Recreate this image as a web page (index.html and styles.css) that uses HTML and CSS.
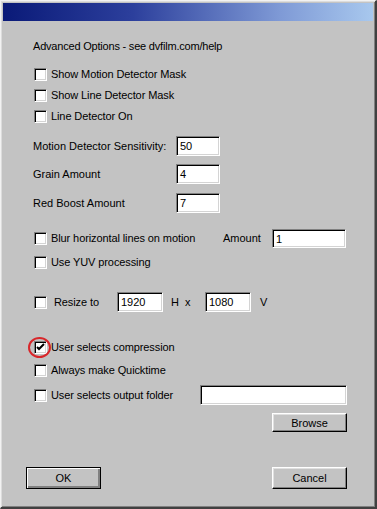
FILE: index.html
```html
<!DOCTYPE html>
<html lang="en">

<head>
    <meta charset="UTF-8">
    <title>Advanced Options</title>
    <link rel="stylesheet" href="styles.css">
</head>

<body>
    <div class="window">
        <div class="titlebar"></div>

        <div class="content">
            <div class="row heading">Advanced Options - see dvfilm.com/help</div>

            <div class="row r-mask1"><span class="check"></span><span class="label">Show Motion Detector Mask</span></div>
            <div class="row r-tight"><span class="check"></span><span class="label">Show Line Detector Mask</span></div>
            <div class="row r-tight"><span class="check"></span><span class="label">Line Detector On</span></div>

            <div class="row r-motion"><span class="field-label">Motion Detector Sensitivity:</span><span class="edit small">50</span></div>
            <div class="row r-grain"><span class="field-label">Grain Amount</span><span class="edit small">4</span></div>
            <div class="row r-red"><span class="field-label">Red Boost Amount</span><span class="edit small">7</span></div>

            <div class="row r-blur">
                <span class="check"></span><span class="label blur-label">Blur horizontal lines on motion</span>
                <span class="amount-label">Amount</span><span class="edit amount">1</span>
            </div>
            <div class="row r-yuv"><span class="check"></span><span class="label">Use YUV processing</span></div>

            <div class="row r-resize">
                <span class="check"></span><span class="label resize-label">Resize to</span>
                <span class="edit size">1920</span><span class="hx">H&nbsp;&nbsp;x</span>
                <span class="edit size">1080</span><span class="v">V</span>
            </div>

            <div class="row r-compress">
                <span class="check checked">
                    <svg width="9" height="9" viewBox="0 0 9 9"><path d="M1 4 L3 6 L8 1" fill="none" stroke="#000" stroke-width="2"/></svg>
                    <span class="ring"></span>
                </span>
                <span class="label">User selects compression</span>
            </div>
            <div class="row r-quick"><span class="check"></span><span class="label">Always make Quicktime</span></div>
            <div class="row r-folder">
                <span class="check"></span><span class="label folder-label">User selects output folder</span>
                <span class="edit folder"></span>
            </div>

            <div class="row r-browse"><button class="btn browse">Browse</button></div>

            <div class="row r-bottom">
                <button class="btn default">OK</button>
                <button class="btn">Cancel</button>
            </div>
        </div>
    </div>
</body>

</html>
```

FILE: styles.css
```css
body {
    margin: 0;
    background: #c0c0c0;
    font-family: "Liberation Sans", Arial, sans-serif;
    font-size: 11px;
    color: #000;
}

.window {
    width: 377px;
    height: 509px;
    box-sizing: border-box;
    background: #c3c3c3;
    border-top: 1px solid #f2f2f2;
    border-left: 1px solid #f2f2f2;
    border-right: 2px solid #404040;
    border-bottom: 2px solid #404040;
    box-shadow: inset 1px 1px 0 #dcdcdc, inset -1px -1px 0 #808080;
    padding: 2px 2px 0 2px;
}

.titlebar {
    height: 18px;
    background: linear-gradient(to right, #0a1a78, #2c3f9c 35%, #7f9ad6 75%, #a8c8ee);
}

.content {
    padding-left: 30px;
}

.row {
    display: flex;
    align-items: center;
    height: 20px;
}

.heading { margin-top: 15px; letter-spacing: -0.2px; }
.r-mask1 { margin-top: 8px; }
.r-tight { margin-top: 1px; }
.r-motion { margin-top: 10px; }
.r-grain { margin-top: 8px; }
.r-red { margin-top: 9px; }
.r-blur { margin-top: 15px; }
.r-yuv { margin-top: 4px; }
.r-resize { margin-top: 20px; }
.r-compress { margin-top: 25px; }
.r-quick { margin-top: 3px; }
.r-folder { margin-top: 5px; }
.r-browse { margin-top: 8px; justify-content: flex-end; padding-right: 26px; height: 19px; }
.r-bottom { margin-top: 35px; justify-content: space-between; padding-right: 26px; margin-left: -7px; height: 22px; }

/* sunken checkbox */
.check {
    position: relative;
    width: 13px;
    height: 13px;
    box-sizing: border-box;
    margin-left: 1px;
    background: #fff;
    border-top: 1px solid #808080;
    border-left: 1px solid #808080;
    border-right: 1px solid #fff;
    border-bottom: 1px solid #fff;
    box-shadow: inset 1px 1px 0 #000, inset -1px -1px 0 #d4d4d4;
    flex: none;
}

.check svg {
    position: absolute;
    left: 1px;
    top: 1px;
}

.ring {
    position: absolute;
    left: -7px;
    top: -5px;
    width: 19px;
    height: 17px;
    border: 2px solid #d8262a;
    border-radius: 50%;
}

.label {
    margin-left: 4px;
    letter-spacing: -0.1px;
}

.field-label {
    width: 143px;
}

/* sunken edit box */
.edit {
    height: 20px;
    box-sizing: border-box;
    background: #fff;
    border-top: 1px solid #808080;
    border-left: 1px solid #808080;
    border-right: 1px solid #fff;
    border-bottom: 1px solid #fff;
    box-shadow: inset 1px 1px 0 #000, inset -1px -1px 0 #d4d4d4;
    padding: 3px 0 0 3px;
    line-height: 13px;
}

.edit.small { width: 44px; }

.blur-label { width: 172px; }
.amount-label { width: 49px; }
.edit.amount { width: 74px; height: 19px; }

.resize-label { margin-left: 7px; width: 63px; }
.edit.size { width: 46px; }
.hx { width: 42px; padding-left: 8px; box-sizing: border-box; }
.v { padding-left: 9px; }

.folder-label { width: 149px; }
.edit.folder { width: 147px; }

/* raised buttons */
.btn {
    font-family: inherit;
    font-size: 11px;
    color: #000;
    width: 75px;
    height: 19px;
    padding: 0;
    background: #c3c3c3;
    border-top: 1px solid #fff;
    border-left: 1px solid #fff;
    border-right: 1px solid #000;
    border-bottom: 1px solid #000;
    box-shadow: inset -1px -1px 0 #808080, inset 1px 1px 0 #e0e0e0;
}

.r-bottom .btn { height: 22px; }

.btn.default {
    border: 1px solid #000;
    box-shadow: inset 1px 1px 0 #fff, inset -2px -2px 0 #808080;
}
```
